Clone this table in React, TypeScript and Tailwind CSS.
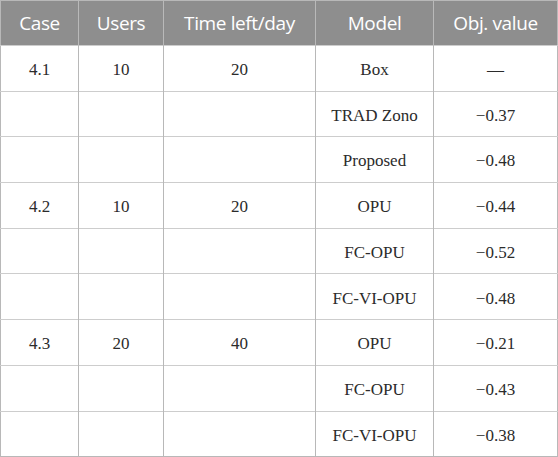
const header = ['Case', 'Users', 'Time left/day', 'Model', 'Obj. value'];

const rows: string[][] = [
  ['4.1', '10', '20', 'Box', '—'],
  ['', '', '', 'TRAD Zono', '−0.37'],
  ['', '', '', 'Proposed', '−0.48'],
  ['4.2', '10', '20', 'OPU', '−0.44'],
  ['', '', '', 'FC-OPU', '−0.52'],
  ['', '', '', 'FC-VI-OPU', '−0.48'],
  ['4.3', '20', '40', 'OPU', '−0.21'],
  ['', '', '', 'FC-OPU', '−0.43'],
  ['', '', '', 'FC-VI-OPU', '−0.38'],
];

const widths = ['w-[78px]', 'w-[85px]', 'w-[152px]', 'w-[118px]', 'w-[124px]'];

export default function App() {
  return (
    <div className="w-[558px] h-[457px] bg-white">
      <table className="w-[557px] table-fixed border-collapse border border-[#b8b8b8]">
        <thead>
          <tr className="h-[45px] bg-[#8e8e8e]">
            {header.map((h, i) => (
              <th
                key={h}
                className={`${widths[i]} border-l border-[#b9b9b9] first:border-l-0 text-center font-normal text-white text-[19px] tracking-[-0.02em] font-['Open_Sans',sans-serif]`}
              >
                {h}
              </th>
            ))}
          </tr>
        </thead>
        <tbody>
          {rows.map((r, ri) => (
            <tr key={ri} className="h-[45.7px] border-t border-[#cdcdcd]">
              {r.map((c, ci) => (
                <td
                  key={ci}
                  className="border-l border-[#b8b8b8] first:border-l-0 pt-[3px] text-center text-[17px] font-normal text-[#2b2b2b] font-['Liberation_Serif',serif]"
                >
                  {c}
                </td>
              ))}
            </tr>
          ))}
        </tbody>
      </table>
    </div>
  );
}
